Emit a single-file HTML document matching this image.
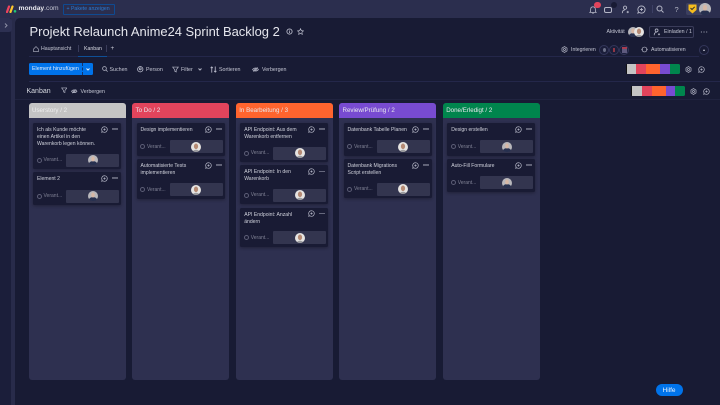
<!DOCTYPE html>
<html lang="de"><head><meta charset="utf-8"><title>Projekt Relaunch Anime24 Sprint Backlog 2</title>
<style>
html,body{margin:0;padding:0;width:720px;height:405px;overflow:hidden;background:#2b2e4e;font-family:"Liberation Sans",sans-serif;color:#d5d8df}
div,span,svg{position:absolute;box-sizing:border-box}
#w{left:0;top:0;width:720px;height:405px;filter:blur(.28px);overflow:hidden}
.t{white-space:nowrap;line-height:1}
.s{font-size:5.2px;color:#c5c7d4}
.col{width:97px;height:277px;top:103px;background:#2e3050;border-radius:3px}
.hd{left:0;top:0;width:97px;height:15px;border-radius:3px 3px 0 0;color:#e8e8ee;font-size:6.2px;line-height:15.6px;padding-left:3.5px;white-space:nowrap}
.card{background:#191b34;border-radius:1.5px;box-shadow:0 1px 3px rgba(0,0,0,.3);width:88px}
.ct{left:4px;top:4px;font-size:5.1px;line-height:7.1px;color:#d0d2dc;white-space:nowrap}
.pb{width:53px;height:13px;background:#33354f;border-radius:1px;right:2px;bottom:2.5px}
.av{width:10px;height:10px;left:21.5px;top:1.5px;stroke:none}
.vr{left:3px;bottom:5px;font-size:5px;color:#7f8194;padding-left:7.5px;white-space:nowrap;line-height:8px}
.vr:before{content:"";position:absolute;box-sizing:border-box;left:.5px;top:1.5px;width:5px;height:5px;border:.8px solid #5c5e76;border-radius:50%}
.ic{right:13px;top:2.5px;width:7px;height:7px;stroke:#b4b6c6}
.dots{right:3px;top:5.3px;width:6px;height:1.4px;background:radial-gradient(circle,#b4b6c6 .5px,transparent .72px) 0 0/2px 1.4px}
.sw{height:10px;display:flex;border-radius:1.5px;overflow:hidden;background:#111}
.sw i{display:block;height:100%}
.line{height:1px;background:#24274a}
svg{fill:none;stroke:#b4b6c6;stroke-width:1}
</style></head><body>
<svg width="0" height="0" style="position:absolute"><defs>
<symbol id="chat" viewBox="0 0 10 10"><path d="M5 1a4 4 0 1 1-2.300 7.300L1 9l.6-1.900A4 4 0 0 1 5 1z"/><path d="M5 3.400v3.200M3.400 5h3.200"/></symbol>
<symbol id="gear" viewBox="0 0 10 10"><path d="M5 .8l3.600 2.100v4.200L5 9.200 1.400 7.100V2.900z"/><circle cx="5" cy="5" r="1.400"/></symbol>
<symbol id="eye" viewBox="0 0 10 10"><path d="M.8 5C3 2 7 2 9.200 5 7 8 3 8 .8 5z"/><circle cx="5" cy="5" r="1.300"/><path d="M2 8l6-6"/></symbol>
<symbol id="filt" viewBox="0 0 10 10"><path d="M1 1.500h8L6 5.500v3L4 7.500v-2z"/></symbol>
<symbol id="user" viewBox="0 0 10 10"><circle cx="4.500" cy="3" r="1.800"/><path d="M1.500 9c0-3 1.500-3.500 3-3.500M7.500 6.500v2.500M6.200 7.800h2.600"/></symbol>
<symbol id="p1" viewBox="0 0 10 10"><circle cx="5" cy="5" r="5" fill="#b9b8bc" stroke="none"/><path d="M1 8.200C2 6.500 3.500 6.300 5 6.300s3 .2 4 1.900A5 5 0 0 1 1 8.200z" fill="#27304f" stroke="none"/><ellipse cx="5" cy="4" rx="1.800" ry="2.500" fill="#d7b8a6" stroke="none"/></symbol>
<symbol id="p2" viewBox="0 0 10 10"><circle cx="5" cy="5" r="5" fill="#e6e4e2" stroke="none"/><ellipse cx="5" cy="4.300" rx="2.100" ry="2.800" fill="#b58a74" stroke="none"/><path d="M2 9c1-1.700 5-1.700 6 0a5 5 0 0 1-6 0z" fill="#9a9a9e" stroke="none"/></symbol>
</defs></svg>
<div id="w">
<!-- top bar -->
<div style="left:0;top:0;width:720px;height:18px;background:#2b2e4e"></div>
<div style="left:0;top:18px;width:11px;height:387px;background:#1b1e3a"></div>
<div style="left:11px;top:18px;width:4px;height:387px;background:#282b4a"></div>
<div style="left:0;top:18px;width:12px;height:14px;background:#2d3052;border-radius:0 3px 3px 0"></div>
<svg style="left:3.500px;top:22.500px;stroke:#8e90a6" width="4" height="5" viewBox="0 0 4 5"><path d="M1 .5l2 2-2 2"/></svg>
<div style="left:15px;top:18px;width:705px;height:387px;background:#181b34;border-radius:5px 0 0 0"></div>

<svg style="left:6px;top:5px;stroke:none" width="11" height="8" viewBox="0 0 11 8"><path d="M1 7L3 1.500" stroke="#f1435f" stroke-width="2.200" stroke-linecap="round"/><path d="M4.500 7l2-5.500" stroke="#fcc52d" stroke-width="2.200" stroke-linecap="round"/><circle cx="9" cy="6.300" r="1.300" fill="#21c878"/></svg>
<div class="t" style="left:18.500px;top:6px;font-size:6.700px;font-weight:bold;color:#e8e8ee">monday<span style="position:static;font-weight:normal;color:#c5c7d4">.com</span></div>
<div style="left:63px;top:3.500px;width:52px;height:11px;border:.8px solid #0f4a91;border-radius:1px"></div>
<div class="t" style="left:66.500px;top:7px;font-size:5.200px;color:#2a7ad3">+ Pakete anzeigen</div>

<svg style="left:588.500px;top:5.500px" width="8" height="8" viewBox="0 0 10 10"><path d="M5 1c2 0 3 1.500 3 3.500V7l1 1H1l1-1V4.500C2 2.500 3 1 5 1z"/><path d="M4 9h2"/></svg>
<div style="left:594px;top:2px;width:6.500px;height:6px;border-radius:3px;background:#e2445c"></div>
<div style="left:604px;top:6.500px;width:8px;height:6px;border:1px solid #b4b6c6;border-radius:2px"></div>
<div style="left:610.500px;top:1.500px;width:6px;height:6px;border-radius:3px;background:#181b34"></div>
<svg style="left:620.500px;top:5px" width="9" height="9"><use href="#user"/></svg>
<svg style="left:636.500px;top:5px" width="9" height="9"><use href="#chat"/></svg>
<div style="left:651.500px;top:5px;width:.8px;height:8px;background:#3d4065"></div>
<svg style="left:656px;top:5px" width="8" height="8" viewBox="0 0 8 8"><circle cx="3.500" cy="3.500" r="2.500"/><path d="M5.500 5.500L7.500 7.500"/></svg>
<div class="t" style="left:674.500px;top:5.500px;font-size:7.500px;color:#b4b6c6">?</div>
<div style="left:685.500px;top:3px;width:16px;height:12px;background:#3c3f5f;border-radius:2px 0 0 2px"></div>
<svg style="left:687.500px;top:4px;stroke:none" width="9" height="10" viewBox="0 0 9 10"><path d="M.5 .5h8V6L4.500 9.500.5 6z" fill="#f7bd1e"/><path d="M2.500 4l1.500 1.500L6.700 2.800" stroke="#33302a" stroke-width="1"/></svg>
<svg style="left:699px;top:3px;stroke:none" width="12" height="12"><use href="#p1"/></svg>

<!-- title -->
<div class="t" style="left:29.500px;top:25.500px;font-size:12.950px;color:#e6e7ee">Projekt Relaunch Anime24 Sprint Backlog 2</div>
<svg style="left:286px;top:28px" width="7" height="7" viewBox="0 0 8 8"><circle cx="4" cy="4" r="3"/><path d="M4 3.500v2.200M4 2.200v.6"/></svg>
<svg style="left:297px;top:28px" width="7" height="7" viewBox="0 0 10 10"><path d="M5 1l1.200 2.800 3 .3-2.200 2 .6 3L5 7.600 2.400 9.100l.6-3-2.200-2 3-.3z"/></svg>

<div class="t s" style="left:606.500px;top:30px">Aktivität</div>
<svg style="left:628px;top:27px;stroke:none" width="10" height="10"><use href="#p1"/></svg>
<svg style="left:634px;top:27px;stroke:none" width="10" height="10"><use href="#p2"/></svg>
<div style="left:649px;top:26px;width:45px;height:12px;border:.8px solid #3a3c5a;border-radius:2px"></div>
<svg style="left:653px;top:28px" width="8" height="8"><use href="#user"/></svg>
<div class="t s" style="left:664px;top:30px;font-size:5.300px">Einladen / 1</div>
<div class="dots" style="left:699.500px;top:31.300px;width:8px;height:2px;background-size:2.700px 2px;right:auto"></div>

<!-- tabs -->
<svg style="left:33px;top:46px" width="6" height="6" viewBox="0 0 10 10"><path d="M1 5l4-4 4 4v4.500H1z"/></svg>
<div class="t s" style="left:41px;top:47px">Hauptansicht</div>
<div style="left:78px;top:45px;width:.8px;height:7px;background:#3a3c5a"></div>
<div class="t s" style="left:84px;top:47px;color:#d9dbe4">Kanban</div>
<div style="left:106px;top:45px;width:.8px;height:7px;background:#3a3c5a"></div>
<div class="t s" style="left:110.500px;top:45.500px;font-size:6.500px">+</div>
<div class="line" style="left:29px;top:56px;width:670px"></div>
<div style="left:78px;top:55.500px;width:29px;height:1.500px;background:#0f4f96"></div>

<svg style="left:561px;top:46px" width="7" height="7"><use href="#gear"/></svg>
<div class="t s" style="left:571px;top:47.500px">Integrieren</div>
<div style="left:599px;top:44.500px;width:10px;height:10px;border-radius:50%;border:.6px solid #33365a;background:#1b1e3a"></div>
<div style="left:609px;top:44.500px;width:10px;height:10px;border-radius:50%;border:.6px solid #33365a;background:#1b1e3a"></div>
<div style="left:619px;top:44.500px;width:10px;height:10px;border-radius:50%;border:.6px solid #33365a;background:#1b1e3a"></div>
<div style="left:602.500px;top:47.500px;width:3px;height:4px;border-radius:50%;background:#6c7088"></div>
<div style="left:613px;top:47.500px;width:2px;height:4px;background:#8e3646"></div>
<div style="left:621.500px;top:46.500px;width:5px;height:6px;background:#5e5a7e;border-top:2px solid #a83c50"></div>
<svg style="left:641px;top:46px" width="7" height="7" viewBox="0 0 10 10"><circle cx="5" cy="5" r="3.500"/><path d="M.5 5h2M7.500 5h2"/></svg>
<div class="t s" style="left:651px;top:47.500px">Automatisieren</div>
<div style="left:699px;top:44.500px;width:10px;height:10px;border-radius:50%;border:.7px solid #33365a"></div>
<div style="left:702.500px;top:48.500px;width:0;height:0;border:1.500px solid transparent;border-bottom:2px solid #c5c7d4;border-top:0"></div>

<!-- toolbar -->
<div style="left:29px;top:63px;width:64px;height:12px;background:#0073ea;border-radius:1.500px"></div>
<div style="left:82px;top:63px;width:0;height:12px;border-left:.7px dashed #14336b"></div>
<div class="t" style="left:32px;top:67px;font-size:5.300px;color:#e4eefb">Element hinzufügen</div>
<svg style="left:85.500px;top:67.500px;stroke:#e4eefb" width="4" height="3" viewBox="0 0 4 3"><path d="M.5 .5L2 2 3.500 .5"/></svg>
<svg style="left:102px;top:66px" width="6" height="6" viewBox="0 0 8 8"><circle cx="3.300" cy="3.300" r="2.500"/><path d="M5 5l2.500 2.500"/></svg>
<div class="t s" style="left:109.500px;top:67.800px;font-size:5.300px">Suchen</div>
<svg style="left:137px;top:66px" width="6.500" height="6.500" viewBox="0 0 8 8"><circle cx="4" cy="4" r="3.300"/><circle cx="4" cy="3.500" r="1.200"/></svg>
<div class="t s" style="left:146px;top:67.800px;font-size:5.300px">Person</div>
<svg style="left:171.500px;top:65.500px" width="7" height="7"><use href="#filt"/></svg>
<div class="t s" style="left:181px;top:67.800px;font-size:5.300px">Filter</div>
<svg style="left:197.500px;top:67.500px" width="4" height="3" viewBox="0 0 4 3"><path d="M.5 .5L2 2 3.500 .5"/></svg>
<svg style="left:210px;top:65.500px" width="7" height="7" viewBox="0 0 8 8"><path d="M2 7.500V1M.7 2.300L2 1l1.300 1.300M6 .5V7M4.700 5.700L6 7l1.300-1.300"/></svg>
<div class="t s" style="left:219px;top:67.800px;font-size:5.300px">Sortieren</div>
<svg style="left:252px;top:65.500px" width="7" height="7"><use href="#eye"/></svg>
<div class="t s" style="left:262px;top:67.800px;font-size:5.300px">Verbergen</div>

<div class="sw" style="left:626px;top:64px;width:53.500px"><i style="width:1px;background:#111"></i><i style="width:9.300px;background:#c4c4c4"></i><i style="width:9.700px;background:#e2445c"></i><i style="width:13.700px;background:#ff642e"></i><i style="width:10px;background:#784bd1"></i><i style="width:10px;background:#00854d"></i></div>
<svg style="left:685px;top:65.500px" width="7" height="7"><use href="#gear"/></svg>
<svg style="left:698px;top:65.500px" width="7" height="7"><use href="#chat"/></svg>
<div class="line" style="left:29px;top:81px;width:691px"></div>

<!-- group title -->
<div class="t" style="left:26.500px;top:88px;font-size:7px;color:#d5d8df">Kanban</div>
<svg style="left:60.500px;top:87px" width="6.500" height="6.500"><use href="#filt"/></svg>
<svg style="left:71px;top:87.500px" width="6.500" height="6.500"><use href="#eye"/></svg>
<div class="t s" style="left:80.500px;top:89.500px;font-size:5.300px">Verbergen</div>
<div class="sw" style="left:631px;top:86px;width:53.500px"><i style="width:1px;background:#111"></i><i style="width:9.500px;background:#c4c4c4"></i><i style="width:10px;background:#e2445c"></i><i style="width:14px;background:#ff642e"></i><i style="width:9.500px;background:#784bd1"></i><i style="width:9.500px;background:#00854d"></i></div>
<svg style="left:690px;top:87.500px" width="7" height="7"><use href="#gear"/></svg>
<svg style="left:703px;top:87.500px" width="7" height="7"><use href="#chat"/></svg>
<div class="line" style="left:15px;top:99px;width:705px;background:#20233f"></div>

<!-- col 1 -->
<div class="col" style="left:28.500px"><div class="hd" style="background:#c4c4c4;color:#eee">Userstory / 2</div>
<div class="card" style="left:4.500px;top:20px;height:46px"><div class="ct">Ich als Kunde möchte<br>einen Artikel in den<br>Warenkorb legen können.</div><svg class="ic"><use href="#chat"/></svg><div class="dots"></div><div class="vr">Verant...</div><div class="pb"><svg class="av"><use href="#p1"/></svg></div></div>
<div class="card" style="left:4.500px;top:69px;height:33px"><div class="ct">Element 2</div><svg class="ic"><use href="#chat"/></svg><div class="dots"></div><div class="vr">Verant...</div><div class="pb"><svg class="av"><use href="#p1"/></svg></div></div>
</div>

<!-- col 2 -->
<div class="col" style="left:132px"><div class="hd" style="background:#e2445c">To Do / 2</div>
<div class="card" style="left:4.500px;top:20px;height:32.500px"><div class="ct">Design implementieren</div><svg class="ic"><use href="#chat"/></svg><div class="dots"></div><div class="vr">Verant...</div><div class="pb"><svg class="av"><use href="#p2"/></svg></div></div>
<div class="card" style="left:4.500px;top:56px;height:39.500px"><div class="ct">Automatisierte Tests<br>implementieren</div><svg class="ic"><use href="#chat"/></svg><div class="dots"></div><div class="vr">Verant...</div><div class="pb"><svg class="av"><use href="#p2"/></svg></div></div>
</div>

<!-- col 3 -->
<div class="col" style="left:235.700px"><div class="hd" style="background:#ff642e">In Bearbeitung / 3</div>
<div class="card" style="left:4.500px;top:20px;height:39px"><div class="ct">API Endpoint: Aus dem<br>Warenkorb entfernen</div><svg class="ic"><use href="#chat"/></svg><div class="dots"></div><div class="vr">Verant...</div><div class="pb"><svg class="av"><use href="#p2"/></svg></div></div>
<div class="card" style="left:4.500px;top:62.300px;height:39px"><div class="ct">API Endpoint: In den<br>Warenkorb</div><svg class="ic"><use href="#chat"/></svg><div class="dots"></div><div class="vr">Verant...</div><div class="pb"><svg class="av"><use href="#p2"/></svg></div></div>
<div class="card" style="left:4.500px;top:104.700px;height:39px"><div class="ct">API Endpoint: Anzahl<br>ändern</div><svg class="ic"><use href="#chat"/></svg><div class="dots"></div><div class="vr">Verant...</div><div class="pb"><svg class="av"><use href="#p2"/></svg></div></div>
</div>

<!-- col 4 -->
<div class="col" style="left:339px"><div class="hd" style="background:#784bd1">Review/Prüfung / 2</div>
<div class="card" style="left:4.500px;top:20px;height:32.500px"><div class="ct">Datenbank Tabelle Planen</div><svg class="ic"><use href="#chat"/></svg><div class="dots"></div><div class="vr">Verant...</div><div class="pb"><svg class="av"><use href="#p2"/></svg></div></div>
<div class="card" style="left:4.500px;top:56px;height:39px"><div class="ct">Datenbank Migrations<br>Script erstellen</div><svg class="ic"><use href="#chat"/></svg><div class="dots"></div><div class="vr">Verant...</div><div class="pb"><svg class="av"><use href="#p2"/></svg></div></div>
</div>

<!-- col 5 -->
<div class="col" style="left:442.700px"><div class="hd" style="background:#00854d">Done/Erledigt / 2</div>
<div class="card" style="left:4.500px;top:20px;height:32.500px"><div class="ct">Design erstellen</div><svg class="ic"><use href="#chat"/></svg><div class="dots"></div><div class="vr">Verant...</div><div class="pb"><svg class="av"><use href="#p1"/></svg></div></div>
<div class="card" style="left:4.500px;top:56px;height:32.500px"><div class="ct">Auto-Fill Formulare</div><svg class="ic"><use href="#chat"/></svg><div class="dots"></div><div class="vr">Verant...</div><div class="pb"><svg class="av"><use href="#p1"/></svg></div></div>
</div>

<!-- help -->
<div style="left:656px;top:384px;width:27px;height:12px;border-radius:6px;background:#0073ea"></div>
<div class="t" style="left:662.500px;top:387.500px;font-size:6.500px;color:#eaf3fd">Hilfe</div>
</div>
</body></html>
